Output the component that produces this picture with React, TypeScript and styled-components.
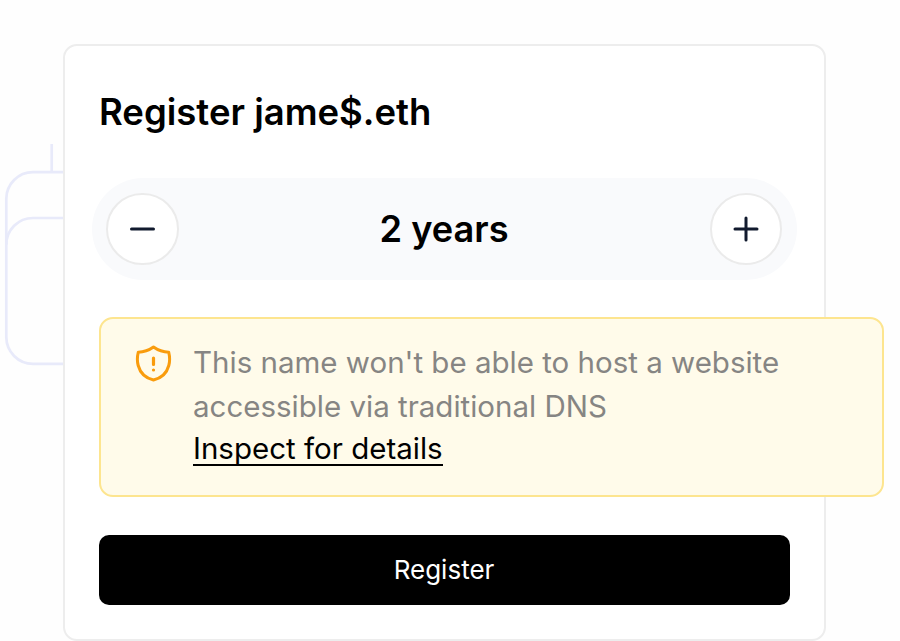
import React from "react";
import styled, { createGlobalStyle } from "styled-components";

const GlobalStyle = createGlobalStyle`
  * { box-sizing: border-box; }
  html, body { margin: 0; padding: 0; }
  body {
    background: #fefefe;
    overflow: hidden;
    font-family: Inter, "Liberation Sans", sans-serif;
    color: #000;
  }
`;

const Page = styled.main`
  position: relative;
  width: 900px;
  height: 641px;
  padding: 44px 0 0 62.5px;
  overflow: hidden;
`;

const Connectors = styled.svg`
  position: absolute;
  left: 0;
  top: 130px;
`;

const Card = styled.section`
  position: relative;
  display: flex;
  flex-direction: column;
  align-items: flex-start;
  width: 763px;
  height: 597px;
  padding: 41px 33px 0 34.5px;
  background: #fff;
  border: 2px solid #ededed;
  border-radius: 14px;
`;

const Title = styled.h1`
  margin: 0;
  font-size: 36.5px;
  font-weight: 600;
  line-height: 50px;
  letter-spacing: 0;
  white-space: nowrap;
`;

const Stepper = styled.div`
  display: flex;
  align-items: center;
  justify-content: space-between;
  width: 705px;
  height: 102px;
  margin: 41px 0 0 -7px;
  padding: 0 15px 0 14px;
  border-radius: 51px;
  background: #f9fafc;
`;

const RoundButton = styled.button`
  display: flex;
  align-items: center;
  justify-content: center;
  width: 72.5px;
  height: 72.5px;
  padding: 0;
  background: #fff;
  border: 2px solid #ebebeb;
  border-radius: 50%;
`;

const Duration = styled.span`
  font-size: 36.2px;
  font-weight: 600;
  line-height: 50px;
`;

const Notice = styled.div`
  display: flex;
  align-items: flex-start;
  flex: none;
  width: 785px;
  height: 180px;
  margin-top: 37px;
  padding: 22px 0 0 34px;
  background: #fffbea;
  border: 2px solid #fde58f;
  border-radius: 14px;
`;

const Shield = styled.svg`
  flex: none;
  margin: 3px 20.5px 0 -0.5px;
`;

const Message = styled.p`
  margin: 0;
  font-size: 29.5px;
  font-weight: 400;
  line-height: 43.5px;
  color: #868583;
  white-space: nowrap;
`;

const DetailsLink = styled.a`
  display: block;
  width: fit-content;
  height: 36px;
  margin-top: 2px;
  line-height: 37px;
  color: #000;
  border-bottom: 2px solid #000;
`;

const RegisterButton = styled.button`
  width: 691px;
  height: 69.5px;
  margin-top: 38px;
  padding: 0 1px 1px 0;
  border: 0;
  border-radius: 10px;
  background: #000;
  color: #fff;
  font-family: inherit;
  font-size: 26px;
  font-weight: 400;
`;

export default function App() {
  return (
    <>
      <GlobalStyle />
      <Page>
        <Connectors width="70" height="245" fill="none" stroke="#e8eafa" strokeWidth="2.7">
          <path d="M51.7 14V42M70 42.2H33A26.7 26.7 0 0 0 6.3 69V207A26.7 26.7 0 0 0 33 233.8H70" />
          <path d="M70 88H33A26.7 26.7 0 0 0 6.3 114.700" />
        </Connectors>
        <Card>
          <Title>Register jame$.eth</Title>
          <Stepper>
            <RoundButton aria-label="Decrease">
              <svg width="36" height="36" fill="none" stroke="#111a2e" strokeWidth="3" strokeLinecap="round">
                <path d="M7.500 18H29.500" />
              </svg>
            </RoundButton>
            <Duration>2 years</Duration>
            <RoundButton aria-label="Increase">
              <svg width="36" height="36" fill="none" stroke="#111a2e" strokeWidth="3" strokeLinecap="round">
                <path d="M7 18H29M18 7V29" />
              </svg>
            </RoundButton>
          </Stepper>
          <Notice>
            <Shield width="38" height="38" viewBox="0 0 38 38" fill="none" stroke="#f99c0d" strokeWidth="3" strokeLinecap="round" strokeLinejoin="round">
              <path d="M18.500 3C13.500 6.600 8.800 8.100 3.300 8.200C2.300 12.200 2 17.200 3.200 21.500C5.200 29 11 34.200 18.500 36C26 34.200 31.800 29 33.800 21.500C35 17.200 34.700 12.200 33.700 8.200C28.200 8.100 23.500 6.600 18.500 3Z" />
              <path d="M18.500 14V20.500M18.500 26H18.510" strokeWidth="3.200" />
            </Shield>
            <Message>
              This name won't be able to host a website
              <br />
              accessible via traditional DNS
              <DetailsLink>Inspect for details</DetailsLink>
            </Message>
          </Notice>
          <RegisterButton>Register</RegisterButton>
        </Card>
      </Page>
    </>
  );
}
